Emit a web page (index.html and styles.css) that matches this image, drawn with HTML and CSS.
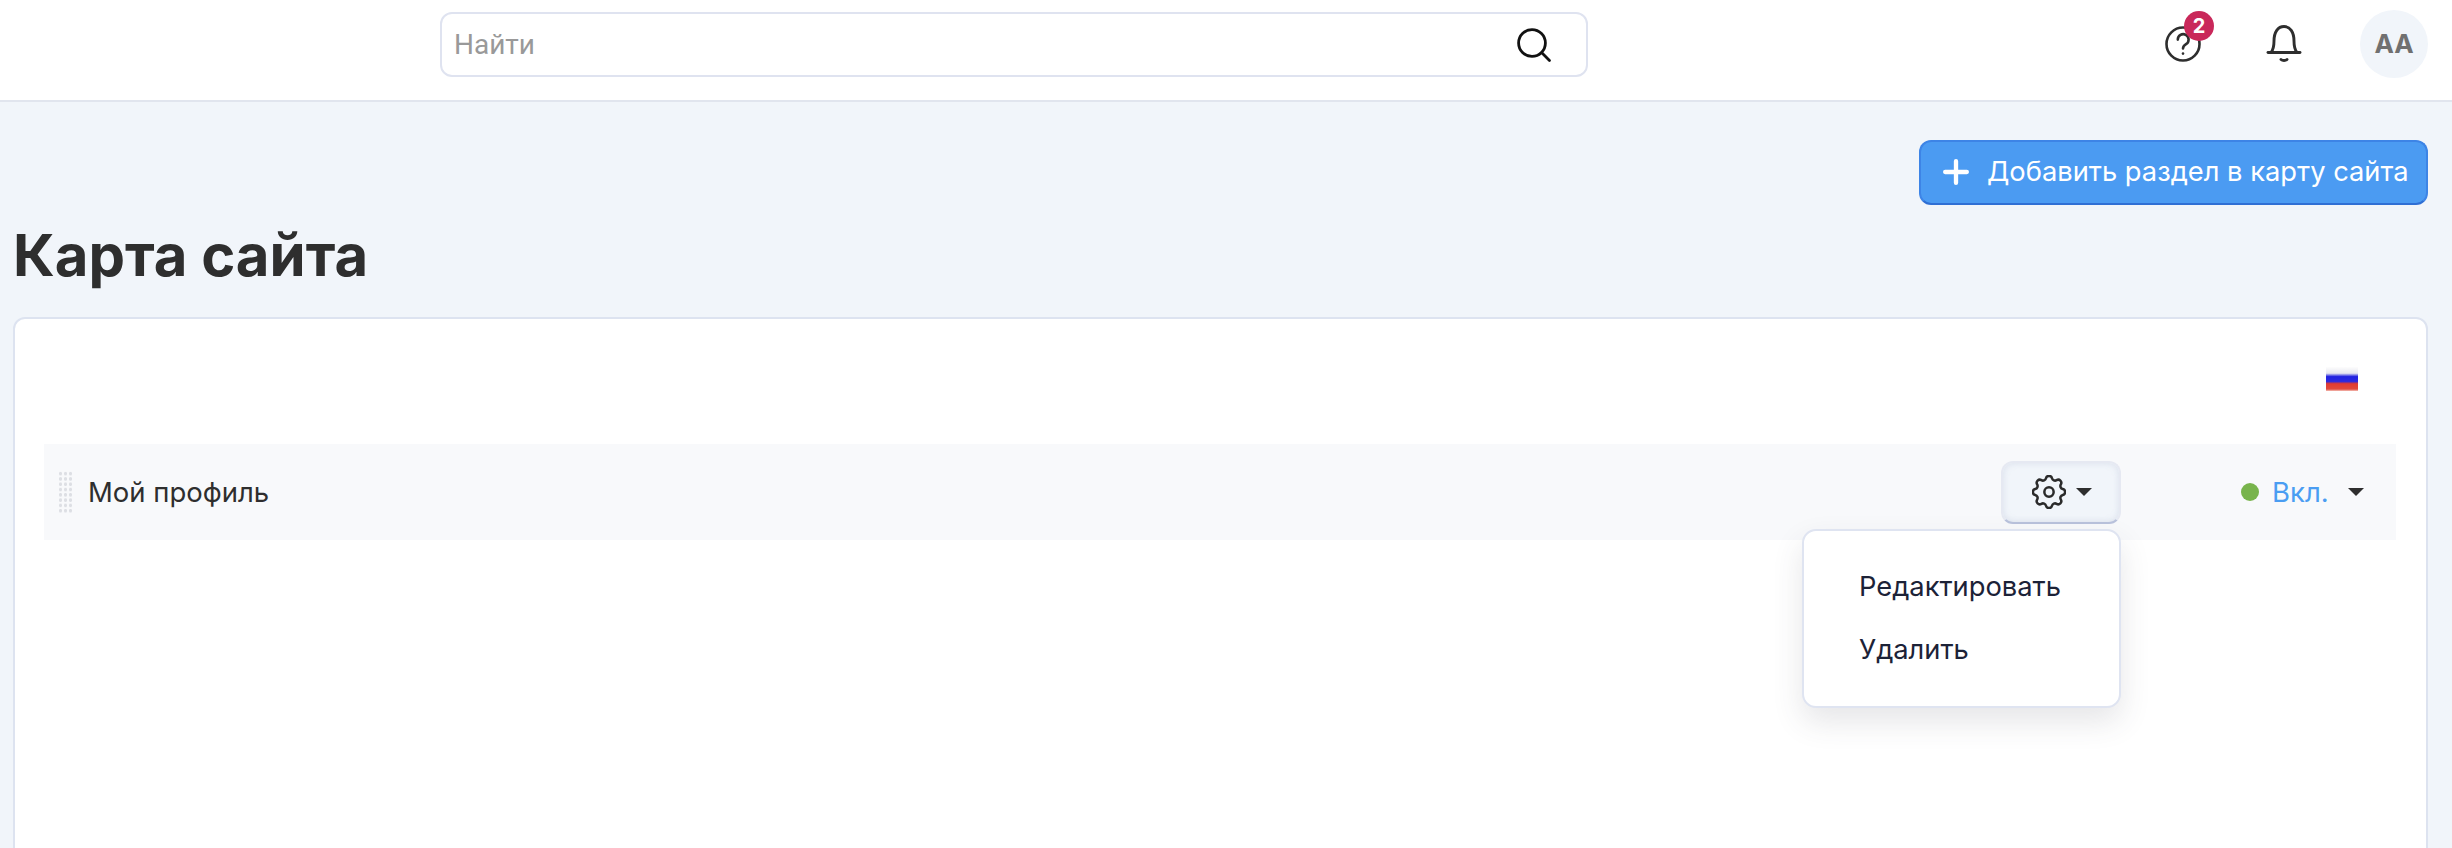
FILE: index.html
```html
<!DOCTYPE html>
<html lang="ru">
<head>
<meta charset="utf-8">
<title>Карта сайта</title>
<link rel="stylesheet" href="styles.css">
</head>
<body>
<header class="topbar">
  <div class="search">
    <input class="search-input" type="text" placeholder="Найти">
    <svg class="search-icon" viewBox="0 0 36 36" fill="none" stroke="#111" stroke-width="2.8" stroke-linecap="round"><circle cx="16" cy="16" r="13.4"/><path d="M25.800 25.800 33.500 33.500"/></svg>
  </div>
  <div class="top-actions">
    <div class="help">
      <svg class="help-icon" viewBox="0 0 36 36" fill="none" stroke="#2e2e2e" stroke-width="2.6" stroke-linecap="round"><circle cx="18" cy="18" r="16.5"/><path d="M12.8 13.6a5.4 5.4 0 1 1 8.2 4.6c-1.900 1.200-3 2.300-3 4.300"/><path d="M18 27.500v.1"/></svg>
      <span class="badge">2</span>
    </div>
    <svg class="bell" viewBox="0 0 36 38" fill="none" stroke="#2e2e2e" stroke-width="2.900" stroke-linecap="round" stroke-linejoin="round"><path d="M2 27.500h32"/><path d="M5 27.500c2.500-3 3-6 3-11.500C8 7 12 1.500 18 1.500S28 7 28 16c0 5.500.5 8.500 3 11.500"/><path d="M15 34.500c1.500 1.300 4.500 1.300 6 0"/></svg>
    <div class="avatar">AA</div>
  </div>
</header>
<main class="page">
  <div class="page-actions">
    <button class="add-btn" type="button">
      <svg class="plus" viewBox="0 0 24 24" fill="none" stroke="#fff" stroke-width="4" stroke-linecap="round"><path d="M12 2v20M2 12h20"/></svg>
      <span>Добавить раздел в карту сайта</span>
    </button>
  </div>
  <h1 class="title">Карта сайта</h1>
  <section class="card">
    <div class="lang-row"><span class="flag"></span></div>
    <div class="row">
      <span class="grip"></span>
      <span class="row-name">Мой профиль</span>
      <div class="settings">
        <button class="gear-btn" type="button">
          <svg class="gear" viewBox="2.500 2.500 19 19" fill="none" stroke="#2b2b2b" stroke-width="1.400" stroke-linecap="round" stroke-linejoin="round"><path d="M10.325 4.317c.426-1.756 2.924-1.756 3.350 0a1.724 1.724 0 0 0 2.573 1.066c1.543-.940 3.310.826 2.370 2.370a1.724 1.724 0 0 0 1.065 2.572c1.756.426 1.756 2.924 0 3.350a1.724 1.724 0 0 0-1.066 2.573c.940 1.543-.826 3.310-2.370 2.370a1.724 1.724 0 0 0-2.572 1.065c-.426 1.756-2.924 1.756-3.350 0a1.724 1.724 0 0 0-2.573-1.066c-1.543.940-3.310-.826-2.370-2.370a1.724 1.724 0 0 0-1.065-2.572c-1.756-.426-1.756-2.924 0-3.350a1.724 1.724 0 0 0 1.066-2.573c-.940-1.543.826-3.310 2.370-2.370.996.608 2.296.07 2.572-1.065z"/><circle cx="12" cy="12" r="2.600"/></svg>
          <span class="caret"></span>
        </button>
        <div class="menu">
          <div class="menu-item">Редактировать</div>
          <div class="menu-item">Удалить</div>
        </div>
      </div>
      <div class="status">
        <span class="dot"></span>
        <span class="status-text">Вкл.</span>
        <span class="caret"></span>
      </div>
    </div>
  </section>
</main>
</body>
</html>
```
FILE: styles.css
```css
* { box-sizing: border-box; }
html, body { margin: 0; height: 100%; }
body {
  height: 848px;
  overflow: hidden;
  display: flex;
  flex-direction: column;
  background: #f1f5fa;
  font-family: Inter, "Noto Sans", sans-serif;
  color: #2e2e2e;
}
.topbar {
  flex: none;
  height: 102px;
  background: #fff;
  border-bottom: 2px solid #e1e5ee;
  display: flex;
  align-items: flex-start;
  padding: 12px 24px 0 440px;
}
.search {
  width: 1148px;
  height: 65px;
  border: 2px solid #dfe3f0;
  border-radius: 12px;
  display: flex;
  align-items: center;
  padding: 0 34px 0 12px;
}
.search-input {
  flex: 1;
  min-width: 0;
  border: 0;
  outline: 0;
  padding: 0;
  background: transparent;
  font-family: Roboto, sans-serif;
  font-size: 28px;
  color: #333;
}
.search-input::placeholder { color: #999; opacity: 1; }
.search-icon { width: 36px; height: 36px; }
.top-actions {
  margin-left: auto;
  margin-top: -2px;
  display: flex;
  align-items: center;
}
.help { position: relative; width: 36px; height: 36px; margin-right: 65px; }
.help-icon { display: block; width: 36px; height: 36px; }
.badge {
  position: absolute;
  left: 19px;
  top: -15px;
  width: 30px;
  height: 30px;
  border-radius: 50%;
  background: #c9285a;
  color: #fff;
  font-size: 20px;
  font-weight: 700;
  line-height: 30px;
  text-align: center;
}
.bell { width: 36px; height: 38px; margin-right: 58px; }
.avatar {
  width: 68px;
  height: 68px;
  border-radius: 50%;
  background: #f1f5fa;
  color: #707070;
  font-size: 26px;
  font-weight: 700;
  line-height: 68px;
  text-align: center;
}
.page {
  flex: 1;
  min-height: 0;
  padding: 38px 24px 0 13px;
}
.page-actions { display: flex; justify-content: flex-end; }
.add-btn {
  width: 509px;
  height: 65px;
  border: 2px solid #3d84e6;
  border-bottom-color: #2f6fd4;
  border-radius: 12px;
  background: #4b9bf2;
  color: #fff;
  font-family: inherit;
  font-size: 27.300px;
  display: flex;
  align-items: center;
  padding: 0 18px 2px 22px;
  gap: 18px;
  white-space: nowrap;
}
.plus { flex: none; width: 26px; height: 26px; }
.title {
  margin: 15px 0 0;
  font-size: 58px;
  font-weight: 700;
  line-height: 70px;
  color: #2e2e2e;
}
.card {
  margin-top: 27px;
  height: 700px;
  background: #fff;
  border: 2px solid #dde3f0;
  border-radius: 12px;
  padding: 0 30px 0 29px;
}
.lang-row {
  height: 125px;
  display: flex;
  justify-content: flex-end;
  align-items: flex-start;
  padding: 48px 38px 0 0;
}
.flag {
  width: 32px;
  height: 24px;
  background: linear-gradient(#fdfdfd 0, #e8e8f0 26%, #2222e0 40%, #2a2ae0 60%, #e23b30 70%, #e04a3c 92%, #f5c0b8 100%);
  filter: blur(.5px);
}
.row {
  height: 96px;
  background: #f8f9fb;
  display: flex;
  align-items: center;
  padding: 0 30px 0 14px;
}
.grip {
  width: 15px;
  height: 43px;
  background-image: radial-gradient(circle, #dddfe4 1.500px, transparent 1.900px);
  background-size: 5px 5.300px;
}
.row-name {
  margin-left: 15px;
  font-size: 27.500px;
  color: #2e2e2e;
}
.settings { position: relative; margin-left: auto; }
.gear-btn {
  width: 120px;
  height: 63px;
  display: flex;
  align-items: center;
  justify-content: flex-start;
  gap: 10px;
  padding: 0 0 0 29px;
  background: #f1f5fa;
  border: 2px solid #e6e9f2;
  border-bottom: 2px solid #b9c2dc;
  border-radius: 12px;
  box-shadow: inset 0 0 6px rgba(170, 180, 210, .35);
}
.gear { flex: none; width: 34px; height: 34px; }
.caret {
  width: 0;
  height: 0;
  border-left: 8px solid transparent;
  border-right: 8px solid transparent;
  border-top: 8px solid #2e2e2e;
}
.menu {
  position: absolute;
  right: 0;
  top: 68px;
  width: 319px;
  height: 179px;
  background: #fff;
  border: 2px solid #dfe4f1;
  border-radius: 14px;
  padding: 24px 0 0 55px;
  box-shadow: 0 14px 30px rgba(60, 60, 80, .13);
}
.menu-item {
  height: 63px;
  line-height: 63px;
  font-size: 27.300px;
  color: #1c2237;
}
.status {
  margin-left: 120px;
  display: flex;
  align-items: center;
  width: 125px;
  padding-right: 2px;
}
.dot { width: 18px; height: 18px; border-radius: 50%; background: #78b44c; }
.status-text { margin-left: 13px; font-size: 27.500px; color: #4a9df2; }
.status .caret { margin-left: auto; }
```
